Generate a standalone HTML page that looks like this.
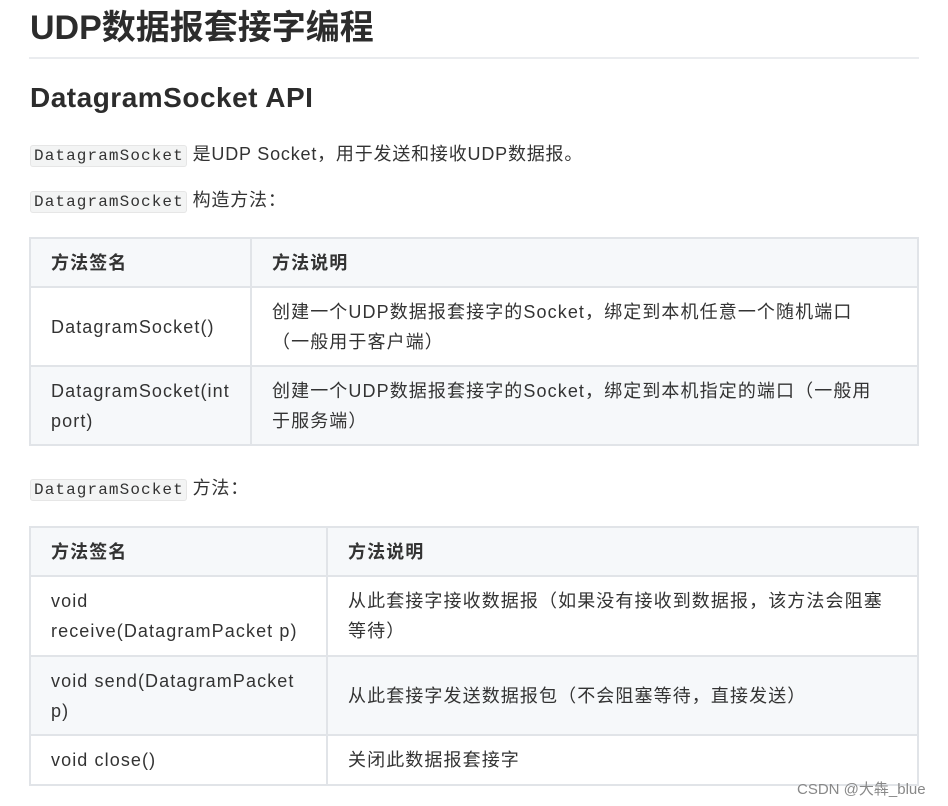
<!DOCTYPE html>
<html><head><meta charset="utf-8"><style>
body{margin:0;width:948px;height:806px;background:#fff;font-family:"Liberation Sans","Noto Sans CJK SC",sans-serif;color:#333;position:relative;overflow:hidden}
h1{position:absolute;left:30px;top:6px;margin:0;font-size:34px;line-height:44px;font-weight:bold;color:#2c2c2c;letter-spacing:0px}
.hr{position:absolute;left:29px;top:57px;width:890px;height:2px;background:#eaecef}
h2{position:absolute;left:30px;top:80px;margin:0;font-size:28px;line-height:36px;font-weight:bold;color:#2c2c2c;letter-spacing:0.5px}
code{font-family:"Liberation Mono",monospace;font-size:16px;letter-spacing:1.1px;background:#f3f4f4;border:1px solid #e6e6e6;border-radius:3px;padding:1px 2px 1px 3px;color:#333}
p{position:absolute;left:30px;margin:0;font-size:18px;line-height:24px;white-space:nowrap;letter-spacing:0.8px}
table{position:absolute;left:29px;border-collapse:collapse;font-size:18px;line-height:30px;color:#333;letter-spacing:1.1px}
td,th{border:2px solid #e1e4e8;padding:0 20px;text-align:left;vertical-align:middle;white-space:nowrap}
th{font-weight:bold;background:#f6f8fa;height:47px}
tr.s td{background:#f6f8fa}
.wm{position:absolute;left:797px;top:778px;font-size:15px;color:#888}
</style></head><body>
<h1>UDP数据报套接字编程</h1>
<div class="hr"></div>
<h2>DatagramSocket API</h2>
<p style="top:142px"><code>DatagramSocket</code> 是UDP Socket，用于发送和接收UDP数据报。</p>
<p style="top:188px"><code>DatagramSocket</code> 构造方法：</p>
<table style="top:237px;width:890px">
<tr><th style="width:179px">方法签名</th><th>方法说明</th></tr>
<tr style="height:79px"><td>DatagramSocket()</td><td>创建一个UDP数据报套接字的Socket，绑定到本机任意一个随机端口<br>（一般用于客户端）</td></tr>
<tr class="s" style="height:79px"><td>DatagramSocket(int<br>port)</td><td>创建一个UDP数据报套接字的Socket，绑定到本机指定的端口（一般用<br>于服务端）</td></tr>
</table>
<p style="top:476px"><code>DatagramSocket</code> 方法：</p>
<table style="top:526px;width:890px">
<tr><th style="width:255px">方法签名</th><th>方法说明</th></tr>
<tr style="height:80px"><td>void<br>receive(DatagramPacket p)</td><td>从此套接字接收数据报（如果没有接收到数据报，该方法会阻塞<br>等待）</td></tr>
<tr class="s" style="height:79px"><td>void send(DatagramPacket<br>p)</td><td>从此套接字发送数据报包（不会阻塞等待，直接发送）</td></tr>
<tr style="height:50px"><td>void close()</td><td>关闭此数据报套接字</td></tr>
</table>
<div class="wm">CSDN @大犇_blue</div>
</body></html>
